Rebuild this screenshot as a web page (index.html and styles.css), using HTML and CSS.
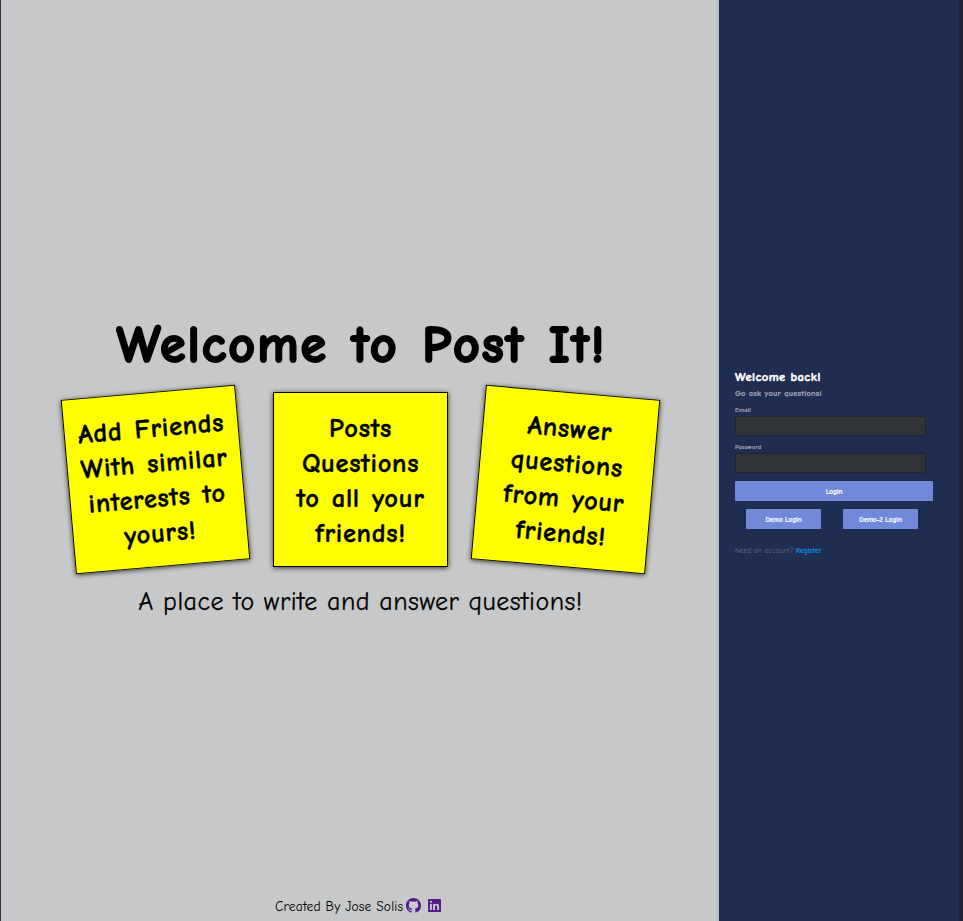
FILE: index.html
```html
<!DOCTYPE html>
<html lang="en">
<head>
<meta charset="utf-8">
<title>Post It</title>
<link rel="stylesheet" href="styles.css">
</head>
<body>
<main class="splash">
  <section class="hero">
    <h1 class="title">Welcome to Post It!</h1>
    <div class="notes">
      <div class="note note-left"><span>Add Friends</span><span>With similar</span><span>interests to</span><span>yours!</span></div>
      <div class="note"><span>Posts</span><span>Questions</span><span>to all your</span><span>friends!</span></div>
      <div class="note note-right"><span>Answer</span><span>questions</span><span>from your</span><span>friends!</span></div>
    </div>
    <p class="tagline">A place to write and answer questions!</p>
  </section>
  <footer class="credits">
    <span class="author">Created By Jose Solis</span>
    <svg class="github" viewBox="0 0 16 16"><path d="M8 0C3.58 0 0 3.58 0 8c0 3.54 2.29 6.53 5.47 7.59.4.07.55-.17.55-.38 0-.19-.01-.82-.01-1.49-2.01.37-2.53-.49-2.69-.94-.09-.23-.48-.94-.82-1.13-.28-.15-.68-.52-.01-.53.63-.01 1.08.58 1.23.82.72 1.21 1.87.87 2.33.66.07-.52.28-.87.51-1.07-1.78-.2-3.64-.89-3.64-3.95 0-.87.31-1.59.82-2.15-.08-.2-.36-1.02.08-2.12 0 0 .67-.21 2.2.82.64-.18 1.32-.27 2-.27s1.36.09 2 .27c1.53-1.04 2.2-.82 2.2-.82.44 1.1.16 1.92.08 2.12.51.56.82 1.27.82 2.15 0 3.07-1.87 3.75-3.65 3.95.29.25.54.73.54 1.48 0 1.07-.01 1.93-.01 2.2 0 .21.15.46.55.38A8.01 8.01 0 0 0 16 8c0-4.42-3.58-8-8-8z"/></svg>
    <svg class="linkedin" viewBox="0 0 24 24"><path fill-rule="evenodd" d="M1.5 0h21A1.5 1.5 0 0 1 24 1.5v21a1.5 1.5 0 0 1-1.5 1.5h-21A1.5 1.5 0 0 1 0 22.500v-21A1.500 1.500 0 0 1 1.500 0zM3.600 9v11.400h3.500V9zM5.300 3.400a2.050 2.050 0 1 0 0 4.100 2.050 2.050 0 0 0 0-4.100zM9.300 9v11.400h3.500v-5.700c0-3.600 4.200-3.500 4.200 0v5.700h3.500v-6.700c0-5.600-5.600-6-7.700-3V9z"/></svg>
  </footer>
</main>
<aside class="panel">
  <form class="login">
    <h2 class="greeting">Welcome back!</h2>
    <p class="prompt">Go ask your questions!</p>
    <label class="label" for="email">Email</label>
    <input class="field" id="email" type="text">
    <label class="label label-password" for="password">Password</label>
    <input class="field" id="password" type="password">
    <button class="button" type="button">Login</button>
    <div class="demos">
      <button class="button demo" type="button">Demo Login</button>
      <button class="button demo" type="button">Demo-2 Login</button>
    </div>
    <p class="register">Need an account? <a>Register</a></p>
  </form>
</aside>
</body>
</html>
```
FILE: styles.css
```css
* { box-sizing: border-box; }
html { background: #202335; }
body {
  margin: 0;
  height: 921px;
  display: flex;
  overflow: hidden;
  font-family: "Comic Sans MS", "Comic Neue", "Open Sans", sans-serif;
  color: #000;
}
h1, h2, p { margin: 0; white-space: nowrap; }
.splash {
  width: 719px;
  height: 921px;
  display: flex;
  flex-direction: column;
  background: #c7c8ca;
  border-left: 1px solid #33343d;
  border-right: 2px solid #b6bfca;
}
.hero {
  flex: 1;
  padding-top: 310px;
  display: flex;
  flex-direction: column;
  align-items: center;
}
.title {
  font-size: 52px;
  line-height: 70px;
  font-weight: 700;
  letter-spacing: 2px;
  word-spacing: 3.2px;
  margin-bottom: 12px;
  padding-left: 5px;
  -webkit-text-stroke: 2px #000;
}
.notes { display: flex; gap: 30px; padding-left: 3px; }
.note {
  width: 175px;
  height: 175px;
  padding-top: 2px;
  display: flex;
  flex-direction: column;
  align-items: center;
  justify-content: center;
  background: #ff0;
  border: 1px solid #000;
  box-shadow: 0 1px 5px rgba(0, 0, 0, .75);
  font-size: 26.5px;
  line-height: 35px;
  font-weight: 600;
  letter-spacing: .7px;
  word-spacing: 2px;
  white-space: nowrap;
  -webkit-text-stroke: .4px #000;
}
.note-left { transform: rotate(-5deg); }
.note-right { transform: rotate(5deg); }
.tagline {
  font-size: 26px;
  line-height: 35px;
  letter-spacing: .5px;
  margin-top: 18px;
  padding-left: 3px;
  -webkit-text-stroke: .25px #000;
}
.credits { height: 31px; display: flex; align-items: center; padding-left: 274px; fill: #551a8b; }
.author { font-size: 13.5px; letter-spacing: .2px; width: 131px; padding-top: 1px; white-space: nowrap; }
.github { width: 15px; height: 15px; }
.linkedin { width: 13px; height: 13px; margin-left: 7px; }
.panel {
  width: 240px;
  height: 921px;
  padding: 368px 10px 0 16px;
  background: #1e2d50;
}
.login { width: 198px; display: flex; flex-direction: column; }
.greeting {
  font-size: 12.5px;
  line-height: 18px;
  letter-spacing: .45px;
  color: #fff;
  font-weight: 700;
  -webkit-text-stroke: .5px #fff;
}
.prompt {
  font-size: 8.3px;
  line-height: 12px;
  letter-spacing: .24px;
  margin-top: 2px;
  color: #a3a9b5;
  font-weight: 600;
  -webkit-text-stroke: .2px #a3a9b5;
}
.label {
  font-size: 6.3px;
  line-height: 8px;
  letter-spacing: .2px;
  margin-top: 6px;
  color: #a3a9b5;
  font-weight: 600;
  -webkit-text-stroke: .15px #a3a9b5;
}
.label-password { margin-top: 7px; }
.field {
  width: 191px;
  height: 20px;
  margin: 2px 0 0;
  padding: 0 4px;
  border: 1px solid #22252c;
  border-radius: 1px;
  background: #303338;
  color: #fff;
}
.button {
  height: 20px;
  margin-top: 8px;
  padding: 0;
  border: 0;
  border-radius: 1px;
  background: #7289da;
  color: #fff;
  font: 600 7.3px "Comic Sans MS", "Comic Neue", "Open Sans", sans-serif;
  letter-spacing: -.15px;
  -webkit-text-stroke: .15px #fff;
}
.demos { display: flex; gap: 22px; padding-left: 11px; }
.demo { width: 75px; }
.register { font-size: 7.2px; line-height: 10px; letter-spacing: .14px; margin-top: 17px; color: #667083; }
.register a { color: #1699ee; -webkit-text-stroke: .2px #1699ee; }
```
